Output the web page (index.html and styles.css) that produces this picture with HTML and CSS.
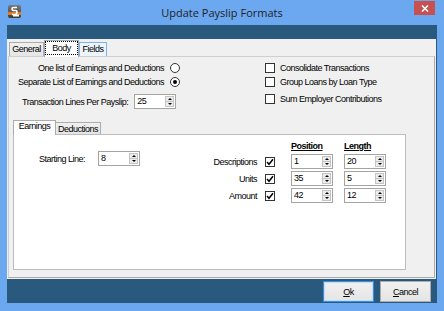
FILE: index.html
```html
<!DOCTYPE html>
<html>
<head>
<meta charset="utf-8">
<link rel="stylesheet" href="styles.css">
</head>
<body>
<div class="window">
  <div class="titlebar">
    <div class="tb-left">
      <svg class="appicon" width="13" height="13" viewBox="0 0 13 13">
        <defs>
          <linearGradient id="ig" x1="0" y1="0" x2="0" y2="1">
            <stop offset="0" stop-color="#7a7a7a"/>
            <stop offset="1" stop-color="#3a3a3a"/>
          </linearGradient>
        </defs>
        <rect x="0" y="0" width="13" height="13" rx="2" fill="url(#ig)"/>
        <rect x="0" y="7" width="13" height="3" fill="#e8781e"/>
        <path d="M9 2.5 H5.5 Q4 2.5 4 4 Q4 5.5 5.5 5.5 H7.5 Q9 5.5 9 7 Q9 9.5 7 9.5 H4" fill="none" stroke="#fff" stroke-width="1.6"/>
        <rect x="5" y="9.5" width="6" height="2" fill="#fff"/>
      </svg>
    </div>
    <div class="title">Update Payslip Formats</div>
    <div class="tb-right">
      <div class="close">
        <svg width="8" height="7" viewBox="0 0 8 7"><path d="M1 0.5 L7 6.5 M7 0.5 L1 6.5" stroke="#fff" stroke-width="1.6"/></svg>
      </div>
    </div>
  </div>

  <div class="client">
    <div class="topband"></div>
    <div class="main">
      <div class="tabstrip">
        <div class="tab tab-general">General</div>
        <div class="tab tab-sel"><span class="focus">Body</span></div>
        <div class="tab tab-hover">Fields</div>
      </div>
      <div class="page">
        <div class="top">
          <div class="leftcol">
            <div class="rrow">
              <span>One list of Earnings and Deductions</span>
              <span class="radio"></span>
            </div>
            <div class="rrow">
              <span>Separate List of Earnings and Deductions</span>
              <span class="radio on"></span>
            </div>
            <div class="lrow">
              <span>Transaction Lines Per Payslip:</span>
              <div class="spin"><span class="val">25</span><span class="btns"><span class="up"></span><span class="dn"></span></span></div>
            </div>
          </div>
          <div class="rightcol">
            <div class="crow"><span class="check"></span><span>Consolidate Transactions</span></div>
            <div class="crow"><span class="check"></span><span>Group Loans by Loan Type</span></div>
            <div class="crow third"><span class="check"></span><span>Sum Employer Contributions</span></div>
          </div>
        </div>

        <div class="inner">
          <div class="itabstrip">
            <div class="itab itab-sel">Earnings</div>
            <div class="itab">Deductions</div>
          </div>
          <div class="ipage">
            <div class="startline">
              <span class="sl-label">Starting Line:</span>
              <div class="spin"><span class="val">8</span><span class="btns"><span class="up"></span><span class="dn"></span></span></div>
            </div>
            <div class="fields">
              <span></span><span></span>
              <span class="hdr">Position</span>
              <span class="hdr">Length</span>

              <span class="flabel">Descriptions</span>
              <span class="check on"><svg width="8" height="8" viewBox="0 0 8 8"><path d="M1 4 L3 6.3 L7 1.2" fill="none" stroke="#000" stroke-width="1.5"/></svg></span>
              <div class="spin"><span class="val">1</span><span class="btns"><span class="up"></span><span class="dn"></span></span></div>
              <div class="spin"><span class="val">20</span><span class="btns"><span class="up"></span><span class="dn"></span></span></div>

              <span class="flabel">Units</span>
              <span class="check on"><svg width="8" height="8" viewBox="0 0 8 8"><path d="M1 4 L3 6.3 L7 1.2" fill="none" stroke="#000" stroke-width="1.5"/></svg></span>
              <div class="spin"><span class="val">35</span><span class="btns"><span class="up"></span><span class="dn"></span></span></div>
              <div class="spin"><span class="val">5</span><span class="btns"><span class="up"></span><span class="dn"></span></span></div>

              <span class="flabel">Amount</span>
              <span class="check on"><svg width="8" height="8" viewBox="0 0 8 8"><path d="M1 4 L3 6.3 L7 1.2" fill="none" stroke="#000" stroke-width="1.5"/></svg></span>
              <div class="spin"><span class="val">42</span><span class="btns"><span class="up"></span><span class="dn"></span></span></div>
              <div class="spin"><span class="val">12</span><span class="btns"><span class="up"></span><span class="dn"></span></span></div>
            </div>
          </div>
        </div>
      </div>
    </div>
    <div class="buttonbar">
      <button class="btn btn-default"><u>O</u>k</button>
      <button class="btn"><u>C</u>ancel</button>
    </div>
  </div>
</div>
</body>
</html>
```

FILE: styles.css
```css
* { box-sizing: border-box; }
html, body { margin: 0; padding: 0; }
body {
  font-family: "Liberation Sans", Arial, sans-serif;
  font-size: 9px;
  letter-spacing: -0.5px;
  color: #000;
  white-space: nowrap;
}
.window {
  width: 444px;
  height: 311px;
  background: #6ca8f0;
  display: flex;
  flex-direction: column;
}
.titlebar {
  height: 25px;
  display: grid;
  grid-template-columns: 1fr auto 1fr;
}
.tb-left { padding: 5px 0 0 8px; }
.appicon { display: block; }
.title {
  font-family: "Open Sans", "Noto Sans", sans-serif;
  font-size: 11px;
  letter-spacing: 0;
  line-height: 25px;
  color: #1e1e1e;
}
.tb-right { display: flex; justify-content: flex-end; align-items: flex-start; }
.close {
  width: 21px;
  height: 14px;
  margin: 1px 9px 0 0;
  background: #c75050;
  display: flex;
  align-items: center;
  justify-content: center;
}
.close svg { display: block; }

.client {
  margin: 0 7px 8px 7px;
  height: 278px;
  background: #295a7e;
  display: flex;
  flex-direction: column;
}
.topband { height: 14px; }
.main {
  height: 240px;
  margin-right: 1px;
  background: #f0f0f0;
  padding: 1px;
  display: flex;
  flex-direction: column;
}
.tabstrip {
  height: 16px;
  display: flex;
  align-items: flex-end;
  padding-left: 1px;
  position: relative;
  z-index: 1;
}
.tab {
  height: 14px;
  border: 1px solid #acacac;
  border-bottom: none;
  background: linear-gradient(#f0f0f0, #e5e5e5);
  text-align: center;
  line-height: 13px;
}
.tab-general { width: 35px; }
.tab-sel {
  width: 35px;
  height: 17px;
  margin-bottom: -1px;
  background: #fff;
  padding-top: 1px;
}
.tab-sel .focus {
  display: inline-block;
  outline: 1px dotted #000;
  width: 31px;
  height: 12px;
  line-height: 12px;
}
.tab-hover {
  width: 28px;
  border-color: #7eb4ea;
  background: #ecf4fc;
}
.page {
  height: 222px;
  border: 1px solid #cfcfcf;
  border-right-color: #a9a9a9;
  border-bottom-color: #a9a9a9;
  background: #f0f0f0;
}

.top { display: flex; height: 52px; }
.leftcol {
  width: 171px;
  padding-top: 4px;
  display: flex;
  flex-direction: column;
  align-items: flex-end;
}
.rrow {
  height: 14px;
  display: flex;
  align-items: center;
  gap: 6px;
}
.radio {
  width: 10px;
  height: 10px;
  border: 1px solid #333;
  border-radius: 50%;
  background: #fff;
  display: flex;
  align-items: center;
  justify-content: center;
}
.radio.on::after {
  content: "";
  width: 4px;
  height: 4px;
  border-radius: 50%;
  background: #000;
}
.lrow {
  align-self: flex-start;
  margin-top: 5px;
  padding-left: 13px;
  height: 15px;
  display: flex;
  align-items: center;
  gap: 6px;
}
.rightcol {
  margin-left: 85px;
  padding-top: 4px;
  display: flex;
  flex-direction: column;
}
.crow {
  height: 14px;
  display: flex;
  align-items: center;
  gap: 5px;
}
.crow.third { margin-top: 3px; }
.check {
  width: 10px;
  height: 10px;
  border: 1px solid #333;
  background: #fff;
  display: flex;
  align-items: center;
  justify-content: center;
}
.check svg { display: block; }

.spin {
  width: 42px;
  height: 15px;
  border: 1px solid #a4a4a4;
  background: #fff;
  display: flex;
}
.val {
  flex: 1;
  padding-left: 2px;
  line-height: 13px;
}
.btns {
  width: 10px;
  padding: 1px 1px 1px 0;
  display: flex;
  flex-direction: column;
}
.up, .dn {
  flex: 1;
  background: #ececec;
  border: 1px solid #c4c4c4;
  display: flex;
  align-items: center;
  justify-content: center;
}
.dn { border-top: none; }
.up::after {
  content: "";
  border-left: 2px solid transparent;
  border-right: 2px solid transparent;
  border-bottom: 2px solid #000;
}
.dn::after {
  content: "";
  border-left: 2px solid transparent;
  border-right: 2px solid transparent;
  border-top: 2px solid #000;
}

.inner {
  margin: 11px 0 0 4px;
  width: 393px;
}
.itabstrip {
  height: 14px;
  display: flex;
  align-items: flex-end;
  position: relative;
  z-index: 1;
}
.itab {
  height: 12px;
  border: 1px solid #acacac;
  border-bottom: none;
  background: linear-gradient(#f0f0f0, #e5e5e5);
  line-height: 12px;
  text-align: center;
  width: 46px;
  margin-left: -1px;
}
.itab-sel {
  width: 43px;
  height: 15px;
  margin: 0 0 -1px 0;
  background: #fff;
  line-height: 11px;
  position: relative;
  z-index: 1;
}
.ipage {
  height: 136px;
  border: 1px solid #bcbcbc;
  background: #fff;
  display: flex;
  align-items: flex-start;
}
.startline {
  padding: 16px 0 0 25px;
  display: flex;
  align-items: center;
}
.sl-label { width: 59px; }
.fields {
  margin-left: 33px;
  padding-top: 5px;
  display: grid;
  grid-template-columns: 92px 26px 53px 42px;
  grid-template-rows: 12px 15px 15px 15px;
  row-gap: 2px;
  align-items: center;
}
.hdr {
  font-weight: bold;
  text-decoration: underline;
  line-height: 12px;
}
.flabel {
  text-align: right;
  padding-right: 8px;
}

.buttonbar {
  height: 24px;
  padding: 2px 6px 0 0;
  display: flex;
  justify-content: flex-end;
  align-items: flex-start;
  gap: 6px;
}
.btn {
  width: 51px;
  height: 21px;
  border: 1px solid #acacac;
  background: linear-gradient(#f0f0f0, #e5e5e5);
  font-family: inherit;
  font-size: 9px;
  letter-spacing: -0.5px;
  color: #000;
  padding: 0;
}
.btn-default { border-color: #3c8fde; box-shadow: inset 0 0 0 1px #c5dcf5; }
```
